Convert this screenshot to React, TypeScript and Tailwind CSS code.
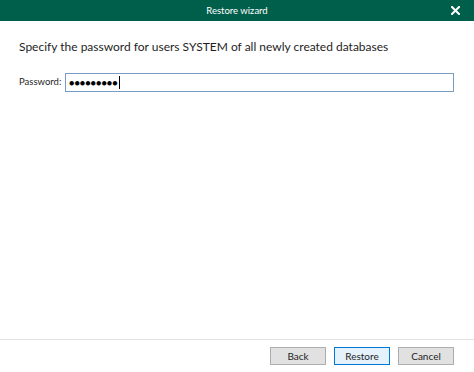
import React from "react";

export default function App() {
  return (
    <div
      className="w-[474px] h-[372px] bg-white flex flex-col overflow-hidden"
      style={{ fontFamily: 'Lato, "Open Sans", sans-serif' }}
    >
      <div className="h-[21px] bg-[#005f4b] flex items-center relative shrink-0">
        <div className="flex-1 text-center text-white text-[9.5px] leading-none">Restore wizard</div>
        <svg className="absolute left-[451px] top-[6px]" width="9" height="9" viewBox="0 0 9 9">
          <path d="M1 1 L8 8 M8 1 L1 8" stroke="white" strokeWidth="2" strokeLinecap="square" />
        </svg>
      </div>
      <div className="flex-1 flex flex-col">
        <div className="pl-[19px] pt-[17px] text-[12px] leading-[17px] text-[#1e1e1e]">
          Specify the password for users SYSTEM of all newly created databases
        </div>
        <div className="flex items-center pl-[19px] mt-[18px]">
          <div className="w-[46px] text-[9.5px] text-[#1e1e1e] whitespace-nowrap">Password:</div>
          <div className="w-[389px] h-[19px] border border-[#7a9cc4] flex items-center pl-[3px]">
            <span className="text-[9px] tracking-[0px] text-black leading-none">●●●●●●●●●</span>
            <span className="w-px h-[13px] bg-black ml-[1px]" />
          </div>
        </div>
      </div>
      <div className="h-[33px] border-t border-[#e3e3e3] flex items-center justify-end gap-[8px] pr-[20px] pb-[1px] shrink-0">
        <button className="w-[56px] h-[18px] bg-[#e1e1e1] border border-[#adadad] text-[10px] text-[#1e1e1e] leading-none">Back</button>
        <button className="w-[56px] h-[18px] bg-[#e5f1fb] border border-[#0078d7] text-[10px] text-[#1e1e1e] leading-none">Restore</button>
        <button className="w-[56px] h-[18px] bg-[#e1e1e1] border border-[#adadad] text-[10px] text-[#1e1e1e] leading-none">Cancel</button>
      </div>
    </div>
  );
}
